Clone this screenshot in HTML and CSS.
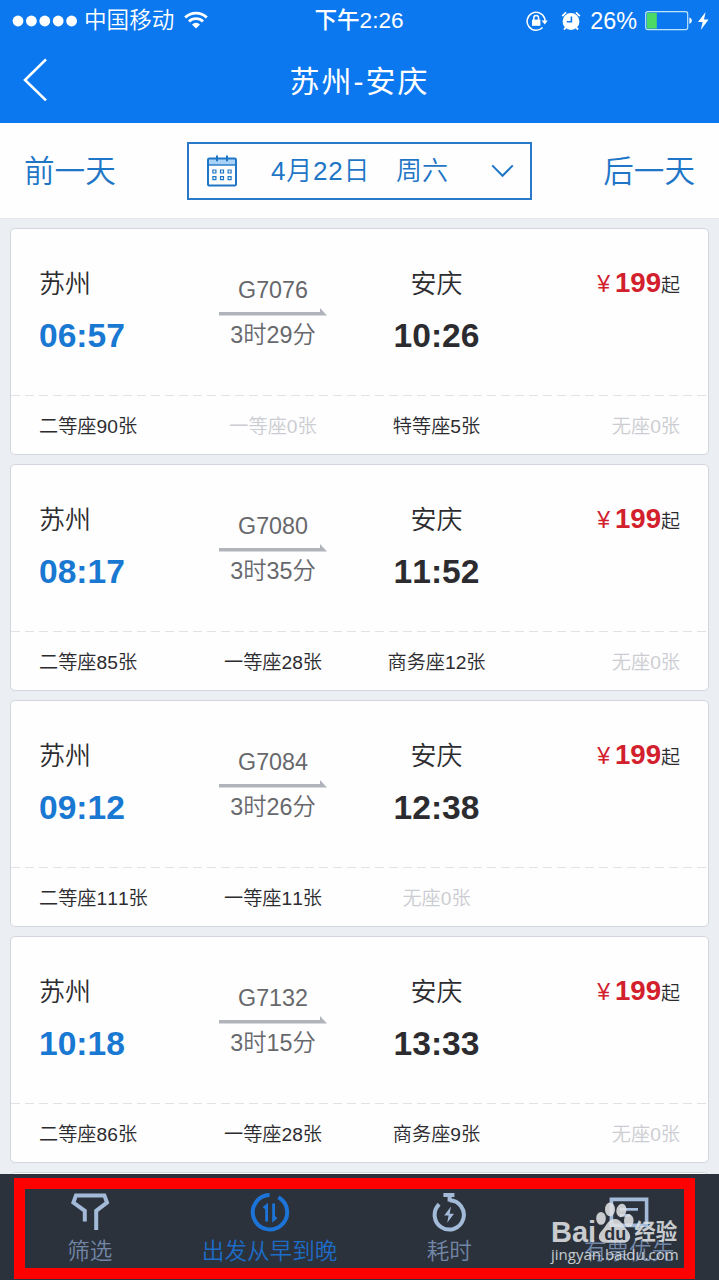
FILE: index.html
```html
<!DOCTYPE html>
<html lang="zh-CN">
<head>
    <meta charset="UTF-8">
    <meta name="viewport" content="width=device-width, initial-scale=1.0">
    <title>苏州-安庆</title>
    <link rel="stylesheet" href="styles.css">
</head>
<body>
    <header class="top">
        <div class="status">
            <div class="status-left">
                <svg class="signal" width="66" height="12" viewBox="0 0 66 12" fill="#fff">
                    <circle cx="6" cy="6" r="5.4"/><circle cx="19.4" cy="6" r="5.4"/><circle cx="32.8" cy="6" r="5.4"/><circle cx="46.2" cy="6" r="5.4"/><circle cx="59.6" cy="6" r="5.4"/>
                </svg>
                <span class="carrier">中国移动</span>
                <svg class="wifi" width="24" height="18" viewBox="0 0 24 18" fill="none" stroke="#fff" stroke-width="2.8">
                    <path d="M1.2 6.6a15.2 15.2 0 0 1 21.6 0"/>
                    <path d="M5 10.6a9.9 9.9 0 0 1 14 0"/>
                    <path d="M12 17.5l-4-4.1a5.6 5.6 0 0 1 8 0z" fill="#fff" stroke="none"/>
                </svg>
            </div>
            <div class="clock">下午2:26</div>
            <div class="status-right">
                <svg width="22" height="20" viewBox="0 0 22 20" fill="none" stroke="#fff" stroke-width="1.5">
                    <path d="M18.6 7.2A9 9 0 1 0 16.6 16.5"/>
                    <path d="M18.8 7v3"/>
                    <path d="M15.6 9.4h6.2l-3.1 4z" fill="#fff" stroke="none"/>
                    <rect x="6" y="8.6" width="8.4" height="6.2" fill="#fff" stroke="none"/>
                    <path d="M7.8 9V7a2.4 2.4 0 0 1 4.8 0v2"/>
                </svg>
                <svg class="alarm" width="20" height="20" viewBox="0 0 20 20" fill="none">
                    <circle cx="10" cy="10.5" r="8.4" fill="#fff"/>
                    <path d="M10.4 5.4v5.4H5.8" stroke="#0b78ef" stroke-width="1.6"/>
                    <path d="M1.2 5.2L5 1.4M18.8 5.2L15 1.4M4.6 16.6L3 18.6M15.4 16.6l1.6 2" stroke="#fff" stroke-width="1.8"/>
                </svg>
                <span class="percent">26%</span>
                <svg class="battery" width="48" height="20" viewBox="0 0 48 20" fill="none">
                    <rect x=".7" y=".7" width="42" height="18" rx="2.2" stroke="#bfe4f7" stroke-width="1.2"/>
                    <rect x="1.8" y="1.8" width="10" height="15.8" fill="#4cd964"/>
                    <path d="M44.4 6.6c3.2.6 3.2 5.6 0 6.2z" fill="#fff"/>
                </svg>
                <svg class="bolt" width="11" height="18" viewBox="0 0 11 18" fill="#fff">
                    <path d="M7.6 0L0 10h4.6L2.8 18 10.6 7.6H6z"/>
                </svg>
            </div>
        </div>
        <div class="nav">
            <svg class="back" width="26" height="44" viewBox="0 0 26 44" fill="none" stroke="#fff" stroke-width="2.6">
                <path d="M24 1.4L3 22l21 20.4"/>
            </svg>
            <h1>苏州-安庆</h1>
        </div>
    </header>

    <div class="days">
        <a class="day">前一天</a>
        <div class="picker">
            <svg width="30" height="32" viewBox="0 0 30 32" fill="none" stroke="#1f76c6" stroke-width="2">
                <rect x="1" y="3.4" width="28" height="6.6" fill="#a9d3f6" stroke="none"/>
                <rect x="1" y="3.4" width="28" height="27.2" rx="1.4"/>
                <path d="M1 10h28" stroke-width="1.4"/>
                <path d="M10 .6v5.6M20 .6v5.6"/>
                <path d="M5.9 15h3v3h-3zM13.5 15h3v3h-3zM21.1 15h3v3h-3zM5.9 21.6h3v3h-3zM13.5 21.6h3v3h-3zM21.1 21.6h3v3h-3z" stroke-width="1.2"/>
            </svg>
            <span class="date">4月22日</span>
            <span class="week">周六</span>
            <svg class="down" width="23" height="14" viewBox="0 0 23 14" fill="none" stroke="#1f76c6" stroke-width="2">
                <path d="M1.2 1.4l10.3 10.4L21.8 1.4"/>
            </svg>
        </div>
        <a class="day">后一天</a>
    </div>

    <main class="list">
        <section class="card">
            <div class="trip">
                <div class="from"><div class="city">苏州</div><div class="time">06:57</div></div>
                <div class="train"><div>G7076</div><svg class="arrow" width="108" height="8"><path d="M0 4h101V0l7 7.6H0z"/></svg><div>3时29分</div></div>
                <div class="to"><div class="city">安庆</div><div class="time">10:26</div></div>
                <div class="price"><i>¥</i><b>199</b><span>起</span></div>
            </div>
            <div class="seats"><span>二等座90张</span><span class="none">一等座0张</span><span>特等座5张</span><span class="none">无座0张</span></div>
        </section>
        <section class="card">
            <div class="trip">
                <div class="from"><div class="city">苏州</div><div class="time">08:17</div></div>
                <div class="train"><div>G7080</div><svg class="arrow" width="108" height="8"><path d="M0 4h101V0l7 7.6H0z"/></svg><div>3时35分</div></div>
                <div class="to"><div class="city">安庆</div><div class="time">11:52</div></div>
                <div class="price"><i>¥</i><b>199</b><span>起</span></div>
            </div>
            <div class="seats"><span>二等座85张</span><span>一等座28张</span><span>商务座12张</span><span class="none">无座0张</span></div>
        </section>
        <section class="card">
            <div class="trip">
                <div class="from"><div class="city">苏州</div><div class="time">09:12</div></div>
                <div class="train"><div>G7084</div><svg class="arrow" width="108" height="8"><path d="M0 4h101V0l7 7.6H0z"/></svg><div>3时26分</div></div>
                <div class="to"><div class="city">安庆</div><div class="time">12:38</div></div>
                <div class="price"><i>¥</i><b>199</b><span>起</span></div>
            </div>
            <div class="seats"><span>二等座111张</span><span>一等座11张</span><span class="none">无座0张</span></div>
        </section>
        <section class="card">
            <div class="trip">
                <div class="from"><div class="city">苏州</div><div class="time">10:18</div></div>
                <div class="train"><div>G7132</div><svg class="arrow" width="108" height="8"><path d="M0 4h101V0l7 7.6H0z"/></svg><div>3时15分</div></div>
                <div class="to"><div class="city">安庆</div><div class="time">13:33</div></div>
                <div class="price"><i>¥</i><b>199</b><span>起</span></div>
            </div>
            <div class="seats"><span>二等座86张</span><span>一等座28张</span><span>商务座9张</span><span class="none">无座0张</span></div>
        </section>
        <section class="card"></section>
    </main>

    <footer class="tabs">
        <div class="tab">
            <svg width="40" height="40" viewBox="0 0 40 40" fill="none" stroke="#a3bbd9" stroke-width="4">
                <path d="M14.8 29.6V18.8L3.4 10.6 6 3.4h28.400l2.600 7.200L26.200 18.800V38"/>
            </svg>
            <span>筛选</span>
        </div>
        <div class="tab active">
            <svg width="40" height="40" viewBox="0 0 40 40" fill="none" stroke="#1c74d8" stroke-width="4">
                <path d="M19.6 3A17.2 17.2 0 1 0 28.4 5.2"/>
                <path d="M16.6 29.500V13.600l-3 2.400M23.600 11.400v16.200l2.800-2.400" stroke-width="2.8"/>
            </svg>
            <span>出发从早到晚</span>
        </div>
        <div class="tab">
            <svg width="40" height="40" viewBox="0 0 40 40" fill="none" stroke="#a3bbd9" stroke-width="4">
                <path d="M14.4 3h11M20.600 3v6.500"/>
                <path d="M20.600 8.300a14.600 14.600 0 1 1-10.400 4"/>
                <path d="M22 14.600l-6.800 9h4.400l-1.400 7.200 6.800-9h-4.400z" fill="#a3bbd9" stroke="none"/>
            </svg>
            <span>耗时</span>
        </div>
        <div class="tab">
            <svg width="40" height="40" viewBox="0 0 40 40" fill="none" stroke="#a3bbd9" stroke-width="3.6">
                <path d="M2.4 7.4h35.2v26H2.4z"/>
                <path d="M11 17.4h18M11 23.4h10" stroke-width="2.6"/>
            </svg>
            <span>有票优先</span>
        </div>
        <div class="frame"></div>
        <div class="mark">
            <div class="mark-top">
                <span class="bai">Bai</span>
                <span class="paw">
                    <svg width="38" height="42" viewBox="0 0 38 42" fill="#dfe1e4">
                        <ellipse cx="5" cy="16.4" rx="4.8" ry="6.4"/>
                        <ellipse cx="14" cy="7.400" rx="5" ry="6.800"/>
                        <ellipse cx="25.4" cy="8.4" rx="5" ry="6.8" transform="rotate(12 25.4 8.4)"/>
                        <ellipse cx="32.8" cy="18.6" rx="4.8" ry="6.4"/>
                        <path d="M19 17c6 0 7.400 6 11.600 10.400 7.400 7.800 2 13.400-3.600 13.400H10.400C3 40.800 0 34.600 6 28.400 11 23.400 12 17 19 17z"/>
                    </svg>
                    <em>du</em>
                </span>
                <span class="jy">经验</span>
            </div>
            <div class="url">jingyan.baidu.com</div>
        </div>
    </footer>
</body>
</html>
```

FILE: styles.css
```css
* {
    box-sizing: border-box;
}
body {
    margin: 0;
    width: 719px;
    height: 1280px;
    display: flex;
    flex-direction: column;
    overflow: hidden;
    background: #ebeff4;
    font-family: "Liberation Sans", "Noto Sans CJK SC", sans-serif;
    font-weight: 350;
    font-kerning: none;
    color: #2c2c30;
}
svg {
    display: block;
    flex: none;
}

/* header */
.top {
    height: 123px;
    background: #0b78ef;
    color: #fff;
}
.status {
    height: 40px;
    display: grid;
    grid-template-columns: 1fr auto 1fr;
    align-items: center;
    padding: 0 10px 0 12px;
    font-size: 22.6px;
    line-height: 42px;
}
.status-left, .status-right {
    display: flex;
    align-items: center;
}
.status-right {
    justify-content: flex-end;
}
.carrier {
    margin: 0 10px 0 6px;
}
.wifi {
    margin-top: -3px;
}
.clock {
    font-weight: 500;
    margin-left: -3px;
}
.alarm {
    margin: 0 9px 0 13px;
}
.percent {
    font-size: 23.4px;
}
.battery {
    margin: 0 5px 0 8px;
}
.nav {
    height: 83px;
    display: grid;
    grid-template-columns: 60px 1fr 60px;
    align-items: center;
    padding-bottom: 3px;
}
.back {
    margin-left: 22px;
}
.nav h1 {
    margin: -2px 0 0;
    text-align: center;
    font-size: 30px;
    font-weight: 400;
    letter-spacing: 2px;
}

/* date bar */
.days {
    height: 95px;
    display: flex;
    align-items: center;
    justify-content: space-between;
    padding: 0 24px;
    background: #fefefe;
    color: #1f76c6;
}
.day {
    font-size: 30.6px;
    line-height: 40px;
}
.picker {
    width: 345px;
    height: 58px;
    border: 2px solid #2a78c8;
    display: flex;
    align-items: center;
    padding-left: 18px;
    font-size: 26px;
    line-height: 42px;
}
.date {
    width: 125px;
    margin-left: 34px;
    letter-spacing: .8px;
}
.week {
    width: 95px;
}

/* trains */
.list {
    flex: 1;
    min-height: 0;
    overflow: hidden;
    padding: 9px 10px 0;
    border-top: 1px solid #e4e5e9;
    display: flex;
    flex-direction: column;
    gap: 9px;
}
.card {
    flex: none;
    height: 227px;
    background: #fefefe;
    border: 1px solid #d3d6dc;
    border-radius: 5px;
}
.trip, .seats {
    display: grid;
    grid-template-columns: 152px 164px 163px 162px;
    padding: 0 28px;
    text-align: center;
}
.trip {
    height: 166px;
}
.city {
    margin-top: 37px;
    font-size: 26px;
    line-height: 36px;
}
.time {
    margin-top: 14px;
    font-size: 33.6px;
    line-height: 40px;
    font-weight: bold;
}
.from {
    text-align: left;
}
.from .time {
    color: #1878d2;
}
.train {
    padding-top: 47px;
    font-size: 23.3px;
    line-height: 28px;
    color: #67686c;
}
.arrow {
    margin: 4px auto 5px;
    fill: #b0b4ba;
}
.price {
    display: flex;
    justify-content: flex-end;
    align-items: baseline;
    padding-top: 36px;
    line-height: 36px;
    color: #d2202c;
}
.price i {
    font-style: normal;
    font-size: 23px;
    margin-right: 5px;
}
.price b {
    font-size: 27.6px;
    font-weight: bold;
}
.price span {
    font-size: 19px;
    color: #2c2c30;
}
.seats {
    height: 59px;
    background: repeating-linear-gradient(90deg, #e2e2e6 0 9px, transparent 9px 14px) 0 0 / 100% 1px no-repeat;
    font-size: 19.2px;
    line-height: 63px;
}
.seats span:first-child {
    text-align: left;
}
.seats span:nth-child(4) {
    text-align: right;
}
.seats .none {
    color: #cccdd2;
}

/* bottom bar */
.tabs {
    position: relative;
    height: 106px;
    display: grid;
    grid-template-columns: repeat(4, 1fr);
    background: #2c323b;
    color: #7287a8;
}
.tab {
    display: flex;
    flex-direction: column;
    align-items: center;
    padding-top: 18px;
    font-size: 22.6px;
    line-height: 40px;
}
.active {
    color: #1c6cc8;
}
.frame {
    position: absolute;
    left: 14px;
    top: 4px;
    width: 681px;
    height: 101px;
    border: 11px solid #ff0000;
}
.mark {
    position: absolute;
    left: 551px;
    top: 28px;
    width: 130px;
    color: #dfe1e4;
    opacity: .88;
}
.mark-top {
    display: flex;
    align-items: flex-end;
    height: 42px;
}
.bai {
    font-size: 29px;
    line-height: 24px;
    font-weight: bold;
}
.paw {
    position: relative;
}
.paw em {
    position: absolute;
    left: 0;
    bottom: 0;
    width: 38px;
    text-align: center;
    font-style: normal;
    font-weight: bold;
    font-size: 18px;
    line-height: 20px;
    color: #2c323b;
}
.jy {
    font-size: 21.5px;
    line-height: 24px;
    font-weight: bold;
}
.url {
    font-family: "Open Sans", sans-serif;
    font-size: 15px;
    line-height: 20px;
    font-weight: 400;
}
```
